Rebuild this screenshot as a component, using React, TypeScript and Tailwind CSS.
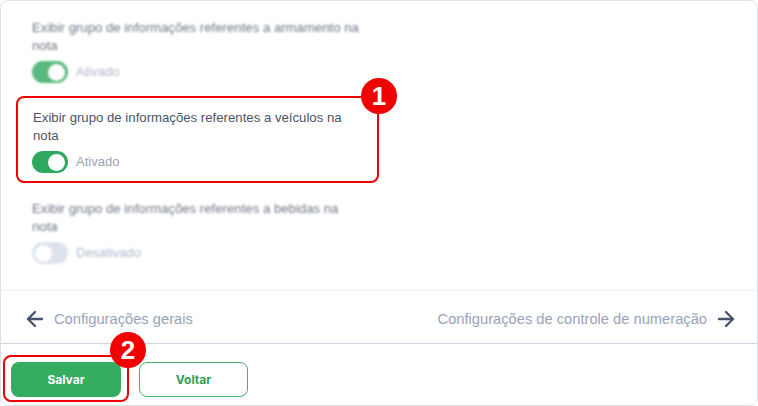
import React from "react";
import { ArrowLeft, ArrowRight } from "lucide-react";

type SettingProps = {
  label: string;
  enabled: boolean;
  blurred?: boolean;
};

const Setting: React.FC<SettingProps> = ({ label, enabled, blurred }) => (
  <div className={blurred ? "blur-[1.2px] opacity-80" : ""}>
    <p className="w-[330px] text-[13.2px] leading-[18px] text-[#4a5568]">{label}</p>
    <div className="mt-[6px] flex items-center gap-2">
      <div
        className={`flex h-[22px] w-9 items-center rounded-full px-[3px] ${blurred ? "" : "-ml-px"} ${
          enabled ? "justify-end bg-[#2fa85f]" : "justify-start bg-[#d5dde8]"
        }`}
      >
        <div className="h-[17px] w-[17px] rounded-full bg-white" />
      </div>
      <span className="text-[13px] text-[#98a3bb]">{enabled ? "Ativado" : "Desativado"}</span>
    </div>
  </div>
);

const Badge: React.FC<{ n: string; className: string }> = ({ n, className }) => (
  <div
    className={`absolute flex h-9 w-9 items-center justify-center rounded-full bg-[#f00000] text-[26px] font-bold text-white ${className}`}
  >
    {n}
  </div>
);

export default function App() {
  return (
    <div className="h-[406px] w-[758px] bg-white font-['Liberation_Sans',sans-serif]">
      <div className="flex h-full flex-col rounded-lg border border-[#dfe3e8]">
        <div className="flex h-[289px] flex-col px-[15px] pt-[18px] shadow-[inset_0_-6px_6px_-6px_rgba(0,0,0,0.05)]">
          <div className="pl-4">
            <Setting label="Exibir grupo de informações referentes a armamento na nota" enabled blurred />
          </div>
          <div className="relative mt-[13px] h-[87px] w-[363px] rounded-lg border-2 border-[#f00000] pl-[15px] pt-[11px]">
            <Setting label="Exibir grupo de informações referentes a veículos na nota" enabled />
            <Badge n="1" className="-right-[20px] -top-[20px]" />
          </div>
          <div className="mt-[17px] pl-4">
            <Setting label="Exibir grupo de informações referentes a bebidas na nota" enabled={false} blurred />
          </div>
        </div>
        <div className="flex h-[54px] items-center justify-between border-t border-b border-t-[#f0f1f3] border-b-[#cfd6df] pl-[22px] pr-[19px] pt-[4px] text-[14.7px] text-[#98a3bb]">
          <div className="flex items-center gap-[7px]">
            <ArrowLeft className="h-6 w-6 text-[#45526a]" strokeWidth={2.3} />
            <span>Configurações gerais</span>
          </div>
          <div className="flex items-center gap-[7px]">
            <span>Configurações de controle de numeração</span>
            <ArrowRight className="h-6 w-6 text-[#45526a]" strokeWidth={2.3} />
          </div>
        </div>
        <div className="flex flex-1 items-start gap-[10px] px-[2px] pt-[11px]">
          <div className="relative rounded-lg border-2 border-[#f00000] px-[6px] pb-[3px] pt-[5px]">
            <button className="block h-[35px] w-[110px] rounded-lg bg-[#35ad60] font-['Inter',sans-serif] text-xs font-bold text-white">
              Salvar
            </button>
            <Badge n="2" className="-right-[19px] -top-[25px]" />
          </div>
          <button className="mt-[7px] h-[35px] w-[109px] rounded-lg border border-[#41b56b] font-['Inter',sans-serif] text-xs font-bold text-[#2f9e57]">
            Voltar
          </button>
        </div>
      </div>
    </div>
  );
}
